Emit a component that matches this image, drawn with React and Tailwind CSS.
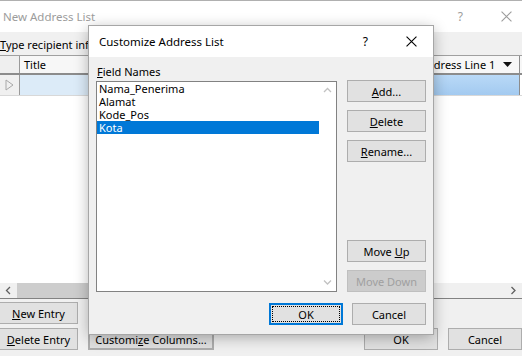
import React from "react";

function XIcon({ className = "", size = 10 }) {
  return (
    <svg width={size} height={size} viewBox="0 0 10 10" className={className}>
      <path d="M0.5 0.5L9.5 9.5M9.5 0.5L0.5 9.5" stroke="currentColor" strokeWidth="1" fill="none" />
    </svg>
  );
}

function Chevron({ dir = "up", color = "#c2c2c2" }) {
  const d =
    dir === "up"
      ? "M1 5L4.5 1.5L8 5"
      : dir === "down"
      ? "M1 1.5L4.5 5L8 1.5"
      : dir === "left"
      ? "M5 1L1.5 4.5L5 8"
      : "M1.5 1L5 4.5L1.5 8";
  const w = dir === "up" || dir === "down" ? 9 : 7;
  const h = dir === "up" || dir === "down" ? 7 : 9;
  return (
    <svg width={w} height={h} viewBox={`0 0 ${w} ${h}`}>
      <path d={d} stroke={color} strokeWidth="1.3" fill="none" />
    </svg>
  );
}

function Btn({ children, className = "" }) {
  return (
    <div
      className={
        "flex h-[22px] items-center justify-center border border-[#adadad] bg-[#e1e1e1] text-black " +
        className
      }
    >
      {children}
    </div>
  );
}

export default function App() {
  return (
    <div className="relative h-[356px] w-[522px] overflow-hidden bg-[#f0f0f0] font-['Noto_Sans',sans-serif] text-[11px] leading-[13px] text-black">
      {/* Background window title bar */}
      <div className="flex h-[32px] items-center border-t border-[#b0b0b0] bg-white pl-[3px] pr-[10px]">
        <span className="text-[11.5px] text-[#9c9c9c]">New Address List</span>
        <span className="ml-auto text-[12px] text-[#9c9c9c]">?</span>
        <XIcon className="ml-[38px] text-[#9c9c9c]" size={11} />
      </div>

      {/* Instruction */}
      <div className="h-[23px] overflow-hidden whitespace-nowrap pt-[6px]">
        <span>
          <u>T</u>ype recipient information in the table. To add more entries, click New Entry.
        </span>
      </div>

      {/* Grid */}
      <div className="flex h-[244px] flex-col border-b border-[#828282] bg-white">
        {/* Header row */}
        <div className="flex h-[20px] border-t border-[#a0a0a0] border-b-2 border-b-[#8c8c8c] bg-[#f7f7f7]">
          <div className="w-[20px] border-r border-[#9a9a9a] bg-[#efefef]" />
          <div className="flex flex-1 items-center border-r border-[#c8c8c8] pl-[4px]">Title</div>
          <div className="flex w-[105px] items-center border-r border-[#8c8c8c] pl-[5px] pr-[7px]">
            <span className="whitespace-nowrap">Address Line 1</span>
            <svg width="9" height="5" viewBox="0 0 9 5" className="ml-auto">
              <path d="M0 0H9L4.5 5Z" fill="#111" />
            </svg>
          </div>
          <div className="w-[2px]" />
        </div>
        {/* Row 1 */}
        <div className="flex h-[21px] border-b border-[#d8d8d8]">
          <div className="flex w-[20px] items-center justify-center border-r border-[#9a9a9a] bg-[#f0f0f0]">
            <svg width="9" height="12" viewBox="0 0 9 12">
              <path d="M1 1L8 6L1 11Z" fill="none" stroke="#a8a8a8" strokeWidth="1" />
            </svg>
          </div>
          <div className="flex-1 bg-[#dcebf8]" />
          <div className="w-[105px] border-r border-[#8c8c8c] bg-gradient-to-b from-[#b9d9f7] to-[#a3caf0]" />
          <div className="w-[2px] bg-white" />
        </div>
        <div className="flex-1" />
        {/* Horizontal scrollbar */}
        <div className="flex h-[15px] items-center bg-[#f0f0f0]">
          <div className="flex w-[17px] items-center justify-center">
            <Chevron dir="left" color="#606060" />
          </div>
          <div className="h-full w-[150px] bg-[#cdcdcd]" />
          <div className="flex-1" />
          <div className="flex w-[17px] items-center justify-center">
            <Chevron dir="right" color="#606060" />
          </div>
        </div>
      </div>

      {/* Bottom buttons */}
      <div className="flex items-end pt-[3px]">
        <div className="flex flex-col gap-[4px]">
          <Btn className="w-[78px] border-l-0">
            <span>
              <u>N</u>ew Entry
            </span>
          </Btn>
          <Btn className="w-[78px] border-l-0">
            <span>
              <u>D</u>elete Entry
            </span>
          </Btn>
        </div>
        <Btn className="ml-[10px] w-[126px] border-2 border-[#0078d7]">
          <span>
            Customi<u>z</u>e Columns...
          </span>
        </Btn>
        <Btn className="ml-auto w-[74px]">OK</Btn>
        <Btn className="ml-[10px] w-[74px]">Cancel</Btn>
      </div>

      {/* Customize Address List dialog */}
      <div className="absolute left-[89px] top-[26px] flex h-[308px] w-[344px] flex-col bg-[#f0f0f0] shadow-[0_0_0_1px_#a6a6a6,0_3px_14px_rgba(0,0,0,0.32)]">
        <div className="flex h-[31px] items-center bg-white pl-[10px] pr-[16px]">
          <span className="text-[11.5px]">Customize Address List</span>
          <span className="ml-auto text-[12px]">?</span>
          <XIcon className="ml-[38px] text-black" size={11} />
        </div>
        <div className="flex flex-1 flex-col px-[7px]">
          <div className="flex pt-[8px]">
            <div className="flex flex-col">
              <div className="h-[14px] pl-[1px] leading-[14px]">
                <u>F</u>ield Names
              </div>
              <div className="mt-[2px] flex h-[211px] w-[241px] border border-[#828282] bg-white">
                <div className="flex w-[222px] flex-col">
                  <div className="h-[13px] pl-[2px] leading-[13px]">Nama_Penerima</div>
                  <div className="h-[13px] pl-[2px] leading-[13px]">Alamat</div>
                  <div className="h-[13px] pl-[2px] leading-[13px]">Kode_Pos</div>
                  <div className="h-[13px] bg-[#0078d7] pl-[2px] leading-[13px] text-white">Kota</div>
                </div>
                <div className="flex w-[17px] flex-col items-center justify-between py-[5px]">
                  <Chevron dir="up" />
                  <Chevron dir="down" />
                </div>
              </div>
            </div>
            <div className="ml-[10px] flex w-[79px] flex-col pt-[15px]">
              <Btn>
                <span>
                  <u>A</u>dd...
                </span>
              </Btn>
              <Btn className="mt-[8px]">
                <span>
                  <u>D</u>elete
                </span>
              </Btn>
              <Btn className="mt-[8px]">
                <span>
                  <u>R</u>ename...
                </span>
              </Btn>
              <Btn className="mt-auto">
                <span>
                  Move <u>U</u>p
                </span>
              </Btn>
              <div className="mt-[8px] flex h-[22px] items-center justify-center border border-[#bfbfbf] bg-[#cccccc] text-[#a0a0a0]">
                Move Down
              </div>
            </div>
          </div>
          <div className="mt-[11px] flex justify-end">
            <div className="relative flex h-[22px] w-[74px] items-center justify-center border-2 border-[#0078d7] bg-[#e1e1e1]">
              <span className="absolute inset-[1px] border border-dotted border-black" />
              OK
            </div>
            <Btn className="ml-[9px] w-[74px]">Cancel</Btn>
          </div>
        </div>
      </div>
    </div>
  );
}
